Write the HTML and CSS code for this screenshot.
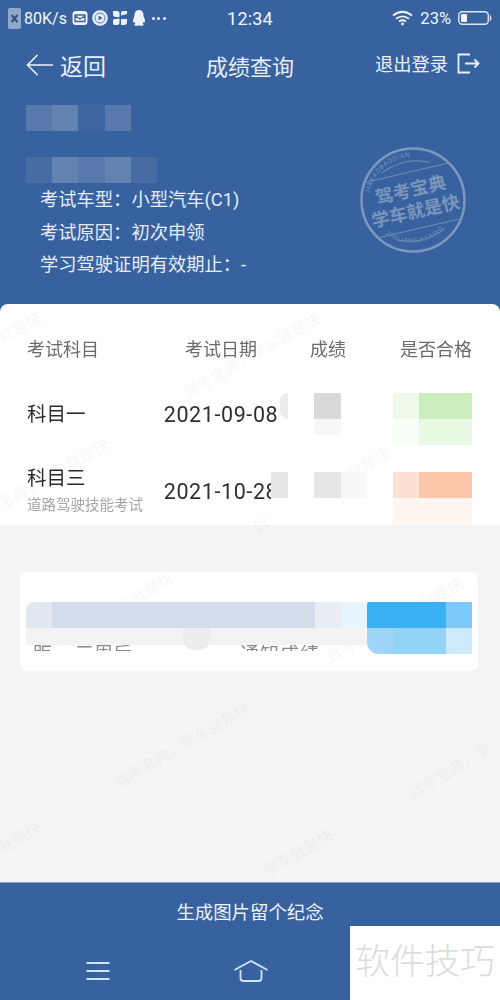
FILE: index.html
```html
<!DOCTYPE html>
<html lang="zh-CN">
<head>
<meta charset="utf-8">
<title>成绩查询</title>
<link rel="stylesheet" href="styles.css">
</head>
<body>
<div class="app">
  <header class="top">
    <div class="status">
      <div class="status-left">
        <svg class="ic-x" width="13" height="25" viewBox="0 0 13 25"><rect x="0" y="2" width="13" height="21" rx="2" fill="#8fa9cb"/><path d="M3.500 9l6 7M9.500 9l-6 7" stroke="#33507c" stroke-width="2"/></svg>
        <span class="speed">80K/s</span>
        <svg width="16" height="16" viewBox="0 0 16 16"><rect x="0.500" y="1" width="15" height="14" rx="3.500" fill="#eef3f8"/><path d="M3 5h10v6.500H3zM3 6l5 3 5-3" fill="none" stroke="#38629f" stroke-width="1.300"/></svg>
        <svg width="16" height="16" viewBox="0 0 16 16"><circle cx="8" cy="8" r="7.800" fill="#e8eef6"/><circle cx="8" cy="8" r="5" fill="none" stroke="#5a7fb0"/><path d="M6.500 5.500l4 2.500-4 2.500z" fill="#38629f"/></svg>
        <svg width="16" height="16" viewBox="0 0 16 16" fill="#eef3f8"><path d="M1 1h4.500q2 0 2 2.500V7H4Q1 7 1 4zM15 1h-4q-2 0-2 2v2.500L15 4zM1 9.500l6.500-1V12q0 3-2.500 3H2.500Q1 15 1 13zM9 9h6v3q0 3-3 3H9z"/></svg>
        <svg width="14" height="16" viewBox="0 0 14 16" fill="#eef3f8"><path d="M7 0c3.500 0 4.500 3 4.500 5.500 0 1.500 2 4.500 1.500 6.500-.5 1-1.500 0-1.500 0s-.2 1-1 1.800c1 .5 1.500 1 1 1.500-.5.700-3.500.700-4.500 0-1 .7-4 .7-4.500 0-.5-.5 0-1 1-1.500-.8-.8-1-1.800-1-1.800s-1 1-1.500 0C.5 10 2.500 7 2.500 5.500 2.500 3 3.500 0 7 0z"/></svg>
        <span class="dots"><i></i><i></i><i></i></span>
      </div>
      <div class="clock">12:34</div>
      <div class="status-right">
        <svg width="21" height="16" viewBox="0 0 21 16" fill="none" stroke="#eef3f8" stroke-width="1.800"><path d="M1 5.500q9.500-7.500 19 0M4 8.800q6.500-5 13 0M7 11.500q3.500-2.500 7 0"/><circle cx="10.500" cy="14" r="1.400" fill="#eef3f8" stroke="none"/></svg>
        <span class="pct">23%</span>
        <svg width="34" height="16" viewBox="0 0 34 16"><rect x="0.800" y="1.800" width="29.500" height="12.500" rx="3.500" fill="none" stroke="#dfe7f1" stroke-width="1.400"/><rect x="3" y="4" width="6" height="8" rx="1" fill="#f2f5f9"/><path d="M32 5.500q1.500 2.500 0 5" fill="none" stroke="#dfe7f1" stroke-width="1.400"/></svg>
      </div>
    </div>
    <nav class="bar">
      <div class="back">
        <svg width="27" height="24" viewBox="0 0 27 24" fill="none" stroke="#eaf1f9" stroke-width="1.600"><path d="M27 12H1.500M11.500 2L1.500 12l10 10"/></svg>
        <span>返回</span>
      </div>
      <div class="title">成绩查询</div>
      <div class="logout">
        <span>退出登录</span>
        <svg width="23" height="21" viewBox="0 0 23 21" fill="none" stroke="#eaf1f9" stroke-width="1.800"><path d="M13 1.500H1.500v18H13M8 10.500h13M17.500 6.500l4 4-4 4"/></svg>
      </div>
    </nav>
    <div class="info">
      <p>考试车型&#xFF1A;小型汽车(C1)</p>
      <p>考试原因&#xFF1A;初次申领</p>
      <p>学习驾驶证明有效期止&#xFF1A;-</p>
    </div>
    <div class="mosaic name-blur">
      <i class="nm"></i><i class="nl"></i><i class="nx"></i><i class="nm"></i><i></i>
      <i></i><i></i><i></i><i></i><i></i>
      <i class="nf"></i><i class="nl"></i><i class="nm"></i><i class="nl"></i><i class="nf"></i>
    </div>
    <svg class="seal" width="110" height="110" viewBox="0 0 110 110">
      <circle cx="55" cy="55" r="51.500" fill="none" stroke="#7d98bd" stroke-width="2.500"/>
      <defs>
        <path id="arcTop" d="M12 62A43 43 0 0 1 88 28"/>
        <path id="arcBot" d="M22 84A43 43 0 0 0 96 62"/>
      </defs>
      <text class="seal-small"><textPath href="#arcTop" startOffset="12%">JIAKAOBAODIAN</textPath></text>
      <text class="seal-small"><textPath href="#arcBot" startOffset="8%">ZHILIANGJIAXIAO</textPath></text>
      <g transform="rotate(-13 55 55)" stroke="#6f8cb5" fill="none">
        <path d="M12 27H98M12 84H98"/>
        <path d="M30 22q25-12 50 0M30 90q25 12 50 0"/>
        <text class="seal-big" x="55" y="51" text-anchor="middle">驾考宝典</text>
        <text class="seal-big" x="55" y="73" text-anchor="middle">学车就是快</text>
      </g>
    </svg>
  </header>

  <section class="card">
    <div class="row head">
      <div>考试科目</div><div class="ctr">考试日期</div><div class="ctr">成绩</div><div class="end">是否合格</div>
    </div>
    <div class="row r1">
      <div class="subj">科目一</div><div class="ctr date">2021-09-08</div><div></div><div></div>
    </div>
    <div class="row r2">
      <div class="subj">科目三<small>道路驾驶技能考试</small></div><div class="ctr date">2021-10-28</div><div></div><div></div>
    </div>
    <div class="cover c1"></div>
    <div class="cover c2"></div>
    <i class="pill p1"></i>
    <i class="pill p2"></i>
    <div class="mosaic score s1"><i class="g1"></i><i class="g4"></i></div>
    <div class="mosaic score s2"><i class="g2"></i><i class="g3"></i></div>
    <div class="mosaic tone t1">
      <i class="lg1"></i><i class="lg2"></i><i class="lg2"></i>
      <i class="lg4"></i><i class="lg3"></i><i class="lg3"></i>
    </div>
    <div class="mosaic tone t2">
      <i class="or1"></i><i class="or2"></i><i class="or2"></i>
      <i class="or3"></i><i class="or3"></i><i class="or3"></i>
    </div>
  </section>

  <main class="body">
    <section class="promo">
      <p class="promo-text"><span class="pt1">距</span><span class="pt2">三周后</span><span class="pt3">通知成绩</span></p>
      <div class="mosaic promo-blur">
        <i class="b1"></i><i class="b2"></i><i class="b2"></i><i class="b2"></i><i class="b2"></i><i class="b2"></i><i class="b2"></i><i class="b2"></i><i class="b2"></i><i class="b2"></i><i class="b2"></i><i class="b3"></i><i class="b4"></i><i class="k1 kt"></i><i class="k1"></i><i class="k1"></i><i class="k2"></i>
        <i class="w1"></i><i class="w1"></i><i class="w1"></i><i class="w1"></i><i class="w1"></i><i class="w1"></i><i class="w2"></i><i class="w1"></i><i class="w1"></i><i class="w1"></i><i class="w1"></i><i class="w1"></i><i class="w1"></i><i class="k3"></i><i class="k4"></i><i class="k4"></i><i class="k5"></i>
      </div>
    </section>
  </main>

  <footer class="foot">
    <div class="make">生成图片留个纪念</div>
    <div class="sys">
      <svg width="26" height="20" viewBox="0 0 26 20" stroke="#cfe3fa" stroke-width="2"><path d="M1.500 2h23M1.500 10h23M1.500 18h23"/></svg>
      <svg width="36" height="24" viewBox="0 0 36 24" fill="none" stroke="#cfe3fa" stroke-width="1.800"><path d="M1.500 11L18 2l16.500 9M7.500 11v8q0 3 3 3h15q3 0 3-3v-8"/></svg>
    </div>
  </footer>

  <div class="tag">软件技巧</div>

  <div class="wm-layer">
    <span class="wm m1">驾考宝典&#xFF0C;学车就是快</span>
    <span class="wm m2">就是快</span>
    <span class="wm m4">宝典&#xFF0C;学车就是快</span>
    <span class="wm m5">驾考宝典&#xFF0C;学车就是快</span>
    <span class="wm m6">驾考宝典&#xFF0C;学车就是快</span>
    <span class="wm m7">驾考宝典&#xFF0C;学车就是快</span>
    <span class="wm m8">驾考宝典&#xFF0C;学车就是快</span>
    <span class="wm m9">驾考宝典&#xFF0C;学</span>
    <span class="wm m10">学车就是快</span>
    <span class="wm m11">就是快</span>
  </div>
</div>
</body>
</html>
```

FILE: styles.css
```css
* { box-sizing: border-box; }
html, body { margin: 0; padding: 0; }
body {
  width: 500px;
  height: 1000px;
  overflow: hidden;
  font-family: Roboto, "Noto Sans CJK SC", sans-serif;
  background: #f5f5f5;
}
i { display: block; font-style: normal; }
p { margin: 0; }

.app {
  position: relative;
  width: 500px;
  height: 1000px;
  display: flex;
  flex-direction: column;
  overflow: hidden;
  filter: blur(0.35px);
}

/* header */
.top {
  position: relative;
  height: 312px;
  flex: none;
  background: #38629f;
  color: #f2f6fb;
}
.status {
  height: 36px;
  padding: 0 8px;
  display: grid;
  grid-template-columns: 1fr auto 1fr;
  align-items: center;
}
.status-left { display: flex; align-items: center; gap: 4px; }
.speed { font-size: 16px; margin-right: 1px; }
.ic-x { margin-right: -1px; }
.dots { display: flex; gap: 2.500px; margin-left: 2px; }
.dots i { width: 3px; height: 3px; border-radius: 50%; background: #eef3f8; }
.clock { font-size: 18px; letter-spacing: .2px; }
.status-right { display: flex; align-items: center; justify-content: flex-end; gap: 7px; }
.pct { font-size: 16.500px; }

.bar {
  height: 62px;
  padding: 0 26px 4px 26px;
  display: grid;
  grid-template-columns: 1fr auto 1fr;
  align-items: center;
}
.back { display: flex; align-items: center; gap: 7px; font-size: 23px; color: #eaf1f9; }
.title { font-size: 22px; color: #e6eef8; }
.logout {
  display: flex;
  align-items: center;
  justify-content: flex-end;
  gap: 9px;
  margin-right: -6px;
  padding-bottom: 4px;
  font-size: 18.300px;
  color: #eaf1f9;
}

.info { padding: 86px 0 0 40px; font-size: 18.300px; line-height: 32.700px; color: #e6edf6; }

.mosaic { position: absolute; display: grid; z-index: 2; }
.name-blur { left: 26px; top: 105px; grid-template-columns: repeat(5, 26.200px); grid-auto-rows: 26px; }
.nl { background: #6282b1; }
.nm { background: #5879ab; }
.nf { background: #466ca3; }
.nx { background: #3e67a2; }

.seal { position: absolute; left: 358px; top: 145px; }
.seal-small { font: 6.500px Roboto, sans-serif; fill: #7490b8; letter-spacing: .7px; }
.seal-big { font: 700 18px "Noto Sans CJK SC", sans-serif; fill: #7a96bd; stroke: none; }

/* result card */
.card {
  position: relative;
  flex: none;
  height: 221px;
  margin-top: -8px;
  background: #fff;
  border-radius: 8px 8px 0 0;
  overflow: hidden;
}
.row {
  display: grid;
  grid-template-columns: 126px 136px 78px 1fr;
  padding: 0 28px 0 27px;
  align-items: center;
}
.head { height: 87px; font-size: 18px; color: #6b6b6b; }
.r1 { height: 47px; }
.r2 { height: 62px; margin-top: 22px; }
.ctr { text-align: center; }
.end { text-align: right; }
.subj { font-size: 19.500px; color: #2b2b2b; line-height: 26px; }
.subj small { display: block; font-size: 14.500px; line-height: 22px; color: #a6a6a6; margin-top: 3px; }
.date { font-size: 21.500px; letter-spacing: .6px; color: #303030; white-space: nowrap; }

.cover { position: absolute; background: #fff; z-index: 2; }
.c1 { left: 277px; top: 80px; width: 40px; height: 60px; }
.c2 { left: 271px; top: 160px; width: 46px; height: 60px; }
.pill { position: absolute; background: #ececec; z-index: 2; }
.p1 { left: 280px; top: 89px; width: 8px; height: 26px; border-radius: 8px 0 0 8px; }
.p2 { left: 271px; top: 168px; width: 17px; height: 26px; background: #e6e6e6; }

.s1 { left: 314px; top: 89px; grid-auto-rows: auto; grid-template-columns: 26.500px; }
.s2 { left: 314px; top: 168px; grid-template-columns: repeat(2, 26.500px); grid-auto-rows: 26px; }
.g1 { background: #d9d9d9; height: 26px; }
.g2 { background: #e6e6e6; }
.g3 { background: #f8f8f8; }
.g4 { background: #f7f7f7; height: 16px; }

.tone { left: 393px; grid-template-columns: repeat(3, 26.300px); grid-auto-rows: 26px; }
.t1 { top: 89px; }
.t2 { top: 168px; }
.lg1 { background: #eef9ea; }
.lg2 { background: #cbecbd; }
.lg3 { background: #e9f8e3; }
.lg4 { background: #f8fdf6; }
.or1 { background: #fde0d2; }
.or2 { background: #fec6a8; }
.or3 { background: #fff6f0; }

/* gray body */
.body { flex: 1; padding: 47px 22px 0 20px; }
.promo {
  position: relative;
  height: 99px;
  background: #fff;
  border-radius: 6px;
  padding: 73px 0 0 13px;
}
.promo-text {
  display: flex;
  height: 6px;
  overflow: hidden;
  font-size: 19px;
  line-height: 20px;
  color: #8a8a8a;
  white-space: nowrap;
}
.pt1 { width: 42px; }
.pt2 { width: 165px; }
.pt3 { letter-spacing: 1px; }
.promo-blur {
  left: 6px;
  top: 30px;
  grid-template-columns: repeat(17, 26.240px);
  grid-auto-rows: 26px;
}
.b1 { background: #e1e8f1; border-radius: 8px 0 0 0; }
.b2 { background: #d4deea; }
.b3 { background: #e8edf4; }
.b4 { background: #e8f4fc; }
.w1 { background: #f3f3f3; height: 17px; }
.w2 { background: #ececec; height: 22px; border-radius: 0 0 10px 10px; }
.k1 { background: #3ab1f5; }
.kt { border-radius: 2px 0 0 0; }
.k2 { background: #7cc9fb; }
.k3 { background: #9fd5f6; border-radius: 0 0 0 12px; }
.k4 { background: #93d3f8; }
.k5 { background: #cdeafc; }

/* footer */
.foot {
  flex: none;
  height: 118px;
  background: #38629f;
  border-top: 1px solid #8aa5c9;
  color: #eef3f9;
}
.make { height: 58px; padding-top: 17px; text-align: center; font-size: 18.400px; line-height: 25px; }
.sys {
  display: flex;
  align-items: center;
  height: 60px;
  padding: 0 0 0 85px;
  gap: 122px;
}

.tag {
  position: absolute;
  z-index: 3;
  left: 350px;
  top: 926px;
  width: 150px;
  height: 74px;
  background: #fff;
  color: #dcdcdc;
  font-size: 35px;
  font-weight: 300;
  line-height: 74px;
  text-align: center;
  white-space: nowrap;
}

/* watermarks */
.wm-layer {
  position: absolute;
  z-index: 1;
  left: 0;
  top: 304px;
  width: 500px;
  height: 578px;
  overflow: hidden;
}
.wm {
  position: absolute;
  font-size: 15.500px;
  line-height: 18px;
  white-space: nowrap;
  color: rgba(0, 0, 0, .04);
  transform: rotate(-30deg);
  transform-origin: 0 50%;
}
.m1 { left: 185px; top: 82px; }
.m2 { left: 0; top: 27px; }
.m4 { left: 0; top: 192px; }
.m5 { left: 255px; top: 217px; }
.m6 { left: 38px; top: 342px; }
.m7 { left: 328px; top: 347px; }
.m8 { left: 115px; top: 472px; }
.m9 { left: 410px; top: 482px; }
.m10 { left: 265px; top: 560px; }
.m11 { left: 0; top: 537px; }
```
